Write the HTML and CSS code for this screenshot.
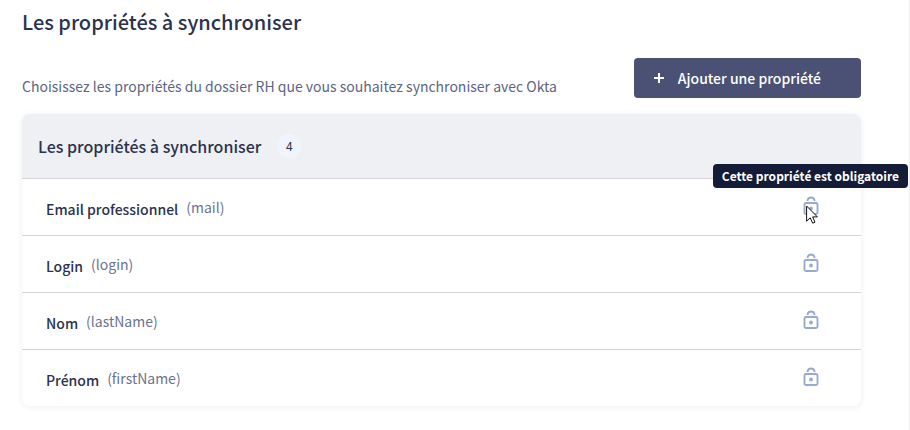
FILE: index.html
```html
<!DOCTYPE html>
<html lang="fr">
<head>
    <meta charset="UTF-8">
    <meta name="viewport" content="width=device-width, initial-scale=1.0">
    <title>Les propriétés à synchroniser</title>
    <link rel="stylesheet" href="styles.css">
</head>
<body>
    <!-- Lock icon shared by all the rows -->
    <svg class="sprite" aria-hidden="true">
        <symbol id="lock" viewBox="0 0 16 20">
            <rect x="1.500" y="7" width="13" height="11" rx="1.500" fill="none" stroke="currentColor" stroke-width="1.900"/>
            <path d="M4.300 5C4.700 2.800 6 1.500 8 1.500s3.400 1.300 3.800 3.500" fill="none" stroke="currentColor" stroke-width="1.800"/>
            <circle cx="8" cy="12.500" r="1.900" fill="currentColor"/>
        </symbol>
    </svg>

    <main class="page">
        <h1 class="page-title">Les propriétés à synchroniser</h1>

        <div class="toolbar">
            <p class="description">Choisissez les propriétés du dossier RH que vous souhaitez synchroniser avec Okta</p>
            <button class="add-button" type="button">
                <svg class="plus" viewBox="0 0 10 10" aria-hidden="true"><path d="M5 0v10M0 5h10" stroke="currentColor" stroke-width="2"/></svg>
                Ajouter une propriété
            </button>
        </div>

        <section class="card">
            <div class="card-header">
                <h2 class="card-title">Les propriétés à synchroniser</h2>
                <span class="count">4</span>
            </div>
            <ul class="property-list">
                <li class="property">
                    <span class="name">Email professionnel</span>
                    <span class="code">(mail)</span>
                    <span class="lock">
                        <svg class="lock-icon"><use href="#lock"/></svg>
                        <span class="tooltip" role="tooltip">Cette propriété est obligatoire</span>
                        <svg class="cursor" viewBox="0 0 12 19" aria-hidden="true"><path d="M.6 1v15.200l3.600-3.400 2.500 5.400 2.300-1-2.400-5.300h4.800z" fill="#fff" stroke="#111" stroke-width="1"/></svg>
                    </span>
                </li>
                <li class="property">
                    <span class="name">Login</span>
                    <span class="code">(login)</span>
                    <span class="lock"><svg class="lock-icon"><use href="#lock"/></svg></span>
                </li>
                <li class="property">
                    <span class="name">Nom</span>
                    <span class="code">(lastName)</span>
                    <span class="lock"><svg class="lock-icon"><use href="#lock"/></svg></span>
                </li>
                <li class="property">
                    <span class="name">Prénom</span>
                    <span class="code">(firstName)</span>
                    <span class="lock"><svg class="lock-icon"><use href="#lock"/></svg></span>
                </li>
            </ul>
        </section>
    </main>
</body>
</html>
```
FILE: styles.css
```css
* {
    box-sizing: border-box;
}

body {
    margin: 0;
    font-family: "Noto Sans CJK SC", "Noto Sans", sans-serif;
    font-size: 14px;
    line-height: 24px;
    color: #2b324d;
    background-color: #fff;
}

.sprite {
    position: absolute;
    width: 0;
    height: 0;
}

.page {
    min-height: 100vh;
    padding: 8px 48px 24px 22px;
    border-right: 1px solid #ececef;
}

.page-title {
    margin: 0;
    font-size: 20px;
    font-weight: 500;
    line-height: 28px;
}

.toolbar {
    display: flex;
    align-items: flex-end;
    justify-content: space-between;
    margin: 22px 0 16px;
}

.description {
    margin: 0;
    color: #5c6585;
}

.add-button {
    display: flex;
    align-items: center;
    gap: 14px;
    height: 40px;
    padding: 0 40px 0 20px;
    border: none;
    border-radius: 4px;
    background: #4a5175;
    color: #fff;
    font-family: inherit;
    font-size: 14px;
    font-weight: 500;
    cursor: pointer;
}

.plus {
    width: 10px;
    height: 10px;
}

.card {
    border-radius: 8px;
    box-shadow: 0 1px 6px rgba(30, 35, 60, 0.08);
}

.card-header {
    display: flex;
    align-items: center;
    gap: 16px;
    height: 64px;
    padding: 0 16px;
    border-radius: 8px 8px 0 0;
    background: #eff0f4;
}

.card-title {
    margin: 0;
    font-size: 16px;
    font-weight: 500;
}

.count {
    width: 24px;
    border-radius: 50%;
    background: #f0f4fd;
    font-size: 12px;
    text-align: center;
}

.property-list {
    margin: 0;
    padding: 0;
    list-style: none;
}

.property {
    display: flex;
    align-items: center;
    gap: 8px;
    height: 57px;
    padding: 0 42px 0 24px;
    border-top: 1px solid #d3d4d8;
}

.name {
    padding-top: 4px;
    font-weight: 500;
}

.code {
    color: #6b7391;
}

.lock {
    position: relative;
    display: flex;
    margin-left: auto;
    padding-bottom: 2px;
    color: #98aacf;
}

.lock-icon {
    width: 16px;
    height: 20px;
}

/* Sits above the lock of the hovered row */
.tooltip {
    position: absolute;
    right: -89px;
    bottom: 30px;
    padding: 0 9px;
    border-radius: 4px;
    background: #141c38;
    color: #fff;
    font-size: 12px;
    font-weight: 700;
    white-space: nowrap;
}

.cursor {
    position: absolute;
    top: 9px;
    left: 3px;
    width: 12px;
    height: 19px;
}
```
